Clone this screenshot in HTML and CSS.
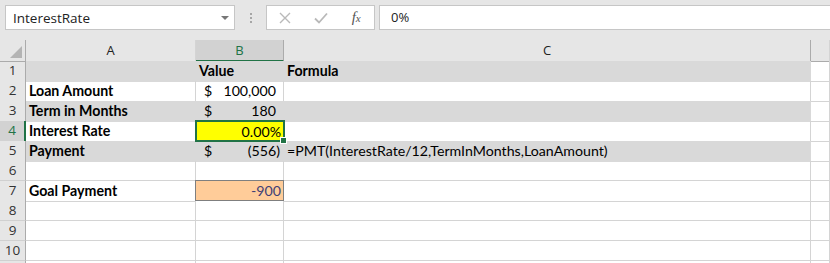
FILE: index.html
```html
<!DOCTYPE html>
<html lang="en">
<head>
    <meta charset="UTF-8">
    <title>Goal Seek - Payment</title>
    <link rel="stylesheet" href="styles.css">
</head>
<body>
    <div class="topbar">
        <div class="name-box">
            <span>InterestRate</span>
            <span class="arrow"></span>
        </div>
        <div class="grip"><i></i><i></i><i></i></div>
        <div class="fx-tools">
            <span class="slot"><svg width="14" height="14" viewBox="0 0 14 14"><path d="M2 2 L12 12 M12 2 L2 12" stroke="#b9b9b9" stroke-width="1.4" fill="none"/></svg></span>
            <span class="slot"><svg width="16" height="14" viewBox="0 0 16 14"><path d="M2 7.5 L6 11.5 L14 2.5" stroke="#b9b9b9" stroke-width="1.8" fill="none"/></svg></span>
            <span class="slot fx">f<sub>x</sub></span>
        </div>
        <div class="formula-input">0%</div>
    </div>

    <div class="sheet">
        <div class="row head-row">
            <div class="corner"><span class="tri"></span></div>
            <div class="col-head">A</div>
            <div class="col-head active">B</div>
            <div class="col-head">C</div>
            <div class="col-head last"></div>
        </div>
        <div class="row">
            <div class="row-head">1</div>
            <div class="cell shade"></div>
            <div class="cell shade bold">Value</div>
            <div class="cell shade bold">Formula</div>
            <div class="cell"></div>
        </div>
        <div class="row">
            <div class="row-head">2</div>
            <div class="cell bold">Loan Amount</div>
            <div class="cell acct"><span>$</span><span>100,000</span></div>
            <div class="cell"></div>
            <div class="cell"></div>
        </div>
        <div class="row">
            <div class="row-head">3</div>
            <div class="cell shade bold">Term in Months</div>
            <div class="cell shade acct"><span>$</span><span>180</span></div>
            <div class="cell shade"></div>
            <div class="cell"></div>
        </div>
        <div class="row">
            <div class="row-head active">4</div>
            <div class="cell bold">Interest Rate</div>
            <div class="cell num selected">0.00%<span class="handle"></span></div>
            <div class="cell"></div>
            <div class="cell"></div>
        </div>
        <div class="row">
            <div class="row-head">5</div>
            <div class="cell shade bold">Payment</div>
            <div class="cell shade acct"><span>$</span><span class="neg">(556)</span></div>
            <div class="cell shade">=PMT(InterestRate/12,TermInMonths,LoanAmount)</div>
            <div class="cell"></div>
        </div>
        <div class="row">
            <div class="row-head">6</div>
            <div class="cell"></div>
            <div class="cell"></div>
            <div class="cell"></div>
            <div class="cell"></div>
        </div>
        <div class="row">
            <div class="row-head">7</div>
            <div class="cell bold">Goal Payment</div>
            <div class="cell num input">-900</div>
            <div class="cell"></div>
            <div class="cell"></div>
        </div>
        <div class="row">
            <div class="row-head">8</div>
            <div class="cell"></div>
            <div class="cell"></div>
            <div class="cell"></div>
            <div class="cell"></div>
        </div>
        <div class="row">
            <div class="row-head">9</div>
            <div class="cell"></div>
            <div class="cell"></div>
            <div class="cell"></div>
            <div class="cell"></div>
        </div>
        <div class="row">
            <div class="row-head">10</div>
            <div class="cell"></div>
            <div class="cell"></div>
            <div class="cell"></div>
            <div class="cell"></div>
        </div>
        <div class="row">
            <div class="row-head"></div>
            <div class="cell"></div>
            <div class="cell"></div>
            <div class="cell"></div>
            <div class="cell"></div>
        </div>
    </div>
</body>
</html>
```

FILE: styles.css
```css
body {
    margin: 0;
    background-color: #fff;
    font-family: "Open Sans", "Noto Sans", sans-serif;
    overflow: hidden;
}
.topbar {
    display: flex;
    align-items: stretch;
    height: 25px;
    padding: 5px 0 10px 5px;
    background-color: #e6e6e6;
}
.name-box {
    width: 230px;
    box-sizing: border-box;
    border: 1px solid #c6c6c6;
    background-color: #fff;
    display: flex;
    align-items: center;
    justify-content: space-between;
    padding: 0 5px 0 7px;
    font-size: 13.5px;
    color: #222;
}
.name-box .arrow {
    width: 0;
    height: 0;
    border-left: 4px solid transparent;
    border-right: 4px solid transparent;
    border-top: 4px solid #777;
}
.grip {
    width: 31px;
    display: flex;
    flex-direction: column;
    align-items: center;
    justify-content: center;
    gap: 2px;
}
.grip i {
    width: 2px;
    height: 2px;
    background-color: #a6a6a6;
}
.fx-tools {
    width: 109px;
    box-sizing: border-box;
    border: 1px solid #c6c6c6;
    background-color: #fff;
    display: flex;
    align-items: center;
}
.fx-tools .slot {
    width: 36px;
    display: flex;
    justify-content: center;
    align-items: center;
}
.fx {
    font-family: "Liberation Serif", serif;
    font-style: italic;
    font-size: 15px;
    color: #555;
}
.fx sub {
    font-size: 11px;
    vertical-align: -1px;
}
.formula-input {
    flex: 1;
    margin-left: 4px;
    border: 1px solid #c6c6c6;
    border-right: none;
    background-color: #fff;
    font-size: 13px;
    line-height: 23px;
    padding-left: 11px;
    color: #222;
}

.sheet {
    font-family: Lato, "Open Sans", sans-serif;
    font-size: 14.2px;
    color: #000;
}
.row {
    display: grid;
    grid-template-columns: 26px 170px 88px 527px 1fr;
    height: 20px;
}
.row > div {
    box-sizing: border-box;
    border-right: 1px solid #d4d4d4;
    border-bottom: 1px solid #d4d4d4;
}
.head-row {
    height: 21px;
    background-color: #e6e6e6;
}
.head-row > div {
    border-bottom: 1px solid #ababab;
    border-right: 1px solid #d4d4d4;
}
.corner {
    position: relative;
    border-right-color: #ababab !important;
}
.corner .tri {
    position: absolute;
    right: 3px;
    bottom: 3px;
    width: 0;
    height: 0;
    border-left: 12px solid transparent;
    border-bottom: 12px solid #b4b4b4;
}
.col-head {
    font-family: "Open Sans", sans-serif;
    font-size: 13px;
    text-align: center;
    line-height: 20px;
    color: #222;
}
.col-head.active {
    background-color: #d2d2d2;
    color: #217346;
    border-bottom: 2px solid #217346 !important;
    border-right-color: #ababab !important;
}
.col-head.last {
    border-left: 1px solid #ababab;
    margin-left: -1px;
}
.row-head {
    background-color: #e6e6e6;
    border-right-color: #ababab !important;
    border-bottom-color: #d0d0d0 !important;
    font-family: "Open Sans", sans-serif;
    font-size: 13.5px;
    text-align: center;
    line-height: 19px;
    color: #333;
}
.row-head.active {
    background-color: #d2d2d2;
    color: #217346;
    border-right: 2px solid #217346 !important;
}
.cell {
    padding: 0 3px;
    line-height: 20px;
    white-space: nowrap;
    overflow: visible;
}
.row > .cell.shade {
    background-color: #d9d9d9;
    border-right-color: #d9d9d9;
    border-bottom-color: #d9d9d9;
}
.bold {
    font-weight: bold;
}
.acct {
    display: flex;
    justify-content: space-between;
    padding: 0 7px 0 8px;
}
.acct .neg {
    margin-right: -4px;
}
.num {
    text-align: right;
    padding-right: 2px;
}
.row > .selected {
    position: relative;
    background-color: #ffff00;
    border: 2px solid #217346;
    margin: -1px 0 -1px -1px;
    width: 90px;
    height: 22px;
    line-height: 20px;
    z-index: 2;
}
.selected .handle {
    position: absolute;
    right: -4px;
    bottom: -4px;
    width: 5px;
    height: 5px;
    background-color: #217346;
    border: 1px solid #fff;
}
.row > .input {
    background-color: #ffcc99;
    border: 1px solid #7f7f7f;
    margin: -1px 0 0 -1px;
    height: 21px;
    width: 89px;
    color: #3f3f76;
}
```
